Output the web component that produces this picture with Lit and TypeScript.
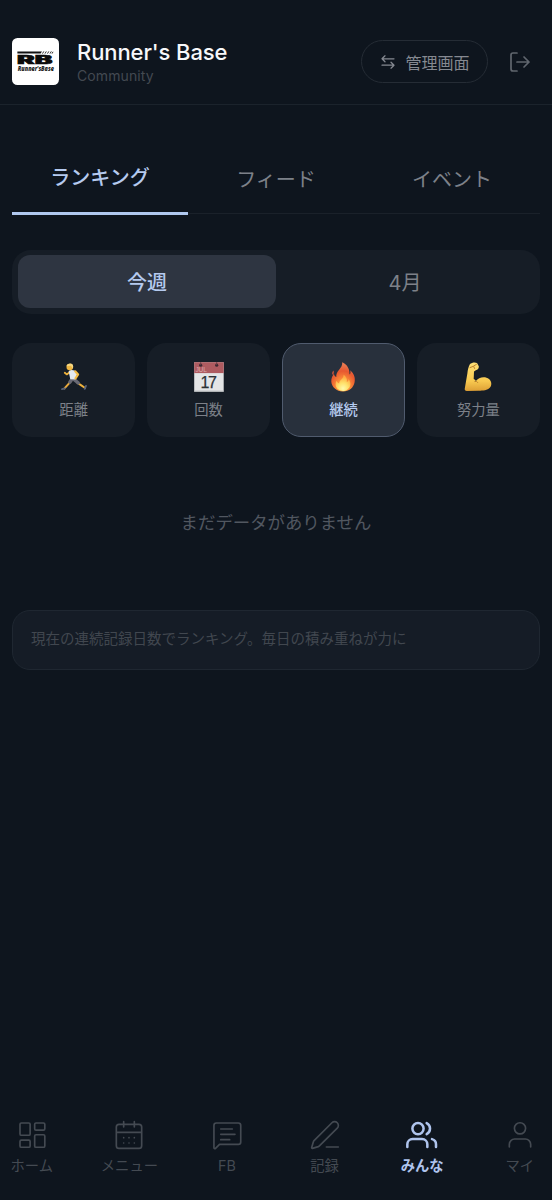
import { LitElement, html, css, svg } from "lit";
import { customElement } from "lit/decorators.js";
import { classMap } from "lit/directives/class-map.js";

const logo = svg`<svg class="logo" viewBox="0 0 47 47" role="img" aria-label="Runner's Base">
  <rect width="47" height="47" rx="5.5" fill="#fff"/>
  <path d="M5.4 13.4H30l-1.4 2.2H5.4z" fill="#111"/>
  <path d="M30.5 15.6l1.3-2.2M33 15.6l1.3-2.2M35.5 15.6l1.3-2.2M38 15.6l1.3-2.2M40 15.6l1-1.8" stroke="#333" stroke-width="1"/>
  <text transform="translate(5 25.6) scale(1.9 1)" textLength="18.6" lengthAdjust="spacingAndGlyphs" font-size="11.6" font-weight="900" font-family="Inter" fill="#0b0b0b" stroke="#0b0b0b" stroke-width=".6">RB</text>
  <text x="5.8" y="33" textLength="36" lengthAdjust="spacingAndGlyphs" font-size="6.6" font-weight="800" font-style="italic" font-family="Open Sans" fill="#222">Runner'sBase</text>
</svg>`;

const runner = svg`<svg class="emoji" viewBox="0 0 30 30">
  <g stroke-linecap="round" stroke-linejoin="round" fill="none">
    <path d="M11 10L7.7 12.4 5.8 10.8" stroke="#efb23c" stroke-width="1.8"/>
    <path d="M12.6 18.4L9.6 21.8 5.5 26.4" stroke="#e9a93b" stroke-width="2"/>
    <path d="M18 20.5L22.3 23.4 26.1 26" stroke="#efb23c" stroke-width="1.9"/>
    <path d="M12.8 17.3L10.8 20.2M15 17.4L19.3 21" stroke="#686975" stroke-width="3.4"/>
    <path d="M6 26.4L3 27.2M25.7 26.9L27 23.9" stroke="#56617a" stroke-width="1.8"/>
  </g>
  <path d="M9.6 9.2Q12 7.3 15.6 8.6L18.1 12.2 16.2 17.6 11.3 17.2Z" fill="#e3e8ef"/>
  <path d="M16.2 9.3L19.1 12.5 16.5 16.3" stroke="#f4bb45" stroke-width="2.2" fill="none" stroke-linecap="round" stroke-linejoin="round"/>
  <circle cx="10.8" cy="5.1" r="3.3" fill="#efb641"/>
  <path d="M7.5 4.3Q8.1 1.3 11.7 1.5 15.2 2.2 13.8 6.7L12.8 5 11.7 3.8Z" fill="#f5d681"/>
</svg>`;

const calendar = svg`<svg class="emoji" viewBox="0 0 30 30">
  <path d="M.2.2h29.5v29.5H.2z" fill="#e4e5e6"/>
  <path d="M.2.2h29.5v10.9H.2z" fill="#ae5b60"/>
  <path d="M.2 29.1h29.5" stroke="#b8babd"/>
  <circle cx="6.7" cy="3.2" r="1.6" fill="#3e2932"/><circle cx="22.7" cy="3.2" r="1.6" fill="#3e2932"/>
  <path d="M6.7 3V.2M22.7 3V.2" stroke="#6c4149"/>
  <text x="1.4" y="10.2" font-family="Liberation Sans" font-size="6.6" textLength="11.5" fill="#dcaaae">JUL</text>
  <text x="6.5" y="26.2" font-family="Liberation Sans" font-size="16" textLength="16.5" fill="#2e3235" stroke="#2e3235" stroke-width=".25">17</text>
</svg>`;

const fire = svg`<svg class="emoji" viewBox="0 0 30 30">
  <defs>
    <radialGradient id="flame" cx=".5" cy=".86" r=".78">
      <stop offset="0" stop-color="#ffb64b"/><stop offset=".38" stop-color="#fa8a38"/><stop offset=".72" stop-color="#e75730"/><stop offset="1" stop-color="#e77850"/>
    </radialGradient>
    <radialGradient id="core" cx=".5" cy=".85" r=".7">
      <stop offset="0" stop-color="#fff9ac"/><stop offset=".5" stop-color="#ffe16b"/><stop offset="1" stop-color="#ffac43"/>
    </radialGradient>
  </defs>
  <path d="M14.2.2C19.6 2.6 21.8 7.4 21.5 12.5 22.7 11.5 22.7 9.6 22.1 8.2 25.9 11.4 27.5 15.5 26.6 20.2 25.5 26 21 29.3 15.2 29.4 8.6 29.5 3.8 25.1 3.3 19.7 3 16.2 4.8 13.7 5.9 11.5 6.2 13.4 6.9 14.4 8.3 15.1 7.5 8.8 14.8 6.6 14.2.2Z" fill="url(#flame)"/>
  <path d="M5.4 8.4C4.4 9.7 3.9 11.2 4.4 12.8 6 11.6 6.1 10 5.4 8.4Z" fill="#d6553b"/>
  <path d="M15.7 12.8C18.5 15 19.3 17.4 18.8 20.1 20.2 19.4 20.6 18.2 20.6 17 23.2 20.5 23.2 25 19.2 27.7 16.7 29.4 12.8 29.3 10.5 27.6 7.2 25.3 7.1 21.6 8.5 18.8 9.2 20.2 9.9 21 11.2 21.5 11.1 18.1 15.6 17 15.7 12.8Z" fill="url(#core)"/>
</svg>`;

const muscle = svg`<svg class="emoji" viewBox="0 0 30 30">
  <defs><linearGradient id="skin" x2="0" y2="1"><stop stop-color="#ffe176"/><stop offset=".65" stop-color="#f8c950"/><stop offset="1" stop-color="#dd9f35"/></linearGradient></defs>
  <path d="M7 2.1C8.6.4 12-.1 14 .9L15.8 4.3C16 6.4 14.9 7.9 12.8 8.3L11 9.4 10.7 17.1C12.2 17.5 12.6 18.5 12.8 19 15.8 14.9 22.3 13.8 26 17.1 28.6 19.4 29.1 23 27 25.6 24.4 28.6 20.2 28.7 15.5 28.8L3.7 29C2.2 28.9 1.7 28.2 1.7 27.1L4.4 11.2C4.7 8 5.6 4.5 7 2.1Z" fill="url(#skin)"/>
  <path d="M11.9 19.4Q14 18.7 14.8 20.5M7 5.6l3.6-1.4 1 2.3M11 3.8l2.4-1.4" fill="none" stroke="#b57927" stroke-width=".9" stroke-linecap="round"/>
</svg>`;

const icons: Record<string, unknown> = {
  home: svg`<rect x="3" y="3" width="7.6" height="9.2" rx="1"/><rect x="14" y="3" width="7.6" height="5.4" rx="1"/><rect x="14" y="11.8" width="7.6" height="9.4" rx="1"/><rect x="3" y="15.8" width="7.6" height="5.4" rx="1"/>`,
  menu: svg`<path d="M8 2v4M16 2v4M3 10h18"/><rect x="2.5" y="4" width="19" height="18" rx="2"/><path d="M8 14h.01M12 14h.01M16 14h.01M8 18h.01M12 18h.01M16 18h.01"/>`,
  fb: svg`<path d="M2.2 21.3V4.8c0-1.1.7-1.8 1.8-1.8h16.5c1.1 0 1.8.7 1.8 1.8v12.4c0 1.1-.7 1.8-1.8 1.8H6.4l-3 3c-.5.5-1.2.2-1.2-.7zM7.3 7.5H16M7.3 11.5H18M7.3 15.5H14"/>`,
  record: svg`<path d="M13 21h9M21.2 6.8a2.8 2.8 0 0 0-4-4L3.8 16.2a2 2 0 0 0-.5.8L2 21.4a.5.5 0 0 0 .6.6l4.4-1.3a2 2 0 0 0 .8-.5z"/>`,
  all: svg`<path d="M16 21v-2a4 4 0 0 0-4-4H5a4 4 0 0 0-4 4v2M22.5 21v-2a4 4 0 0 0-3-3.9M15.5 3.1a4.6 4.6 0 0 1 0 8.2"/><circle cx="9" cy="7.2" r="4.2"/>`,
  my: svg`<path d="M20 21v-2a4 4 0 0 0-4-4H8a4 4 0 0 0-4 4v2"/><circle cx="12" cy="7" r="4.2"/>`,
};

@customElement("app-root")
export class AppRoot extends LitElement {
  static styles = css`
    :host { display: block; height: 1200px; overflow: hidden; background: #0e151e; color: #7d8189; font-family: Inter, "Noto Sans CJK JP", sans-serif; }
    * { box-sizing: border-box; }
    button { font: inherit; color: inherit; border: 0; padding: 0; background: none; white-space: nowrap; }
    .page { height: 1200px; display: flex; flex-direction: column; }
    .header { height: 105px; flex: none; padding: 19px 20px 0 12px; display: flex; align-items: center; border-bottom: 1.5px solid #1b232c; }
    .logo { width: 47px; height: 47px; flex: none; }
    .brand { margin-left: 18px; flex: 1; }
    .title { margin: 0; color: #f7f8fa; font-size: 22px; line-height: 25px; font-weight: 500; letter-spacing: -.1px; white-space: nowrap; padding-top: 1px; }
    .sub { color: #434951; font-size: 14px; line-height: 18px; letter-spacing: .1px; margin-top: 2px; }
    .admin { width: 127px; height: 43px; border: 1.5px solid #252c35; border-radius: 22px; display: flex; align-items: center; justify-content: center; gap: 9px; font-size: 16px; color: #858991; margin-right: 20px; padding-left: 1px; }
    .swap { width: 16px; height: 16px; }
    .exit { width: 24px; height: 24px; color: #60666e; }
    .line { fill: none; stroke: currentColor; stroke-linecap: round; stroke-linejoin: round; display: block; flex: none; }
    .main { flex: 1; padding: 39px 12px 0; }
    .tabs { display: grid; grid-template-columns: repeat(3, 1fr); height: 70px; border-bottom: 1.5px solid #1a212a; }
    .tab { font-size: 20px; line-height: 30px; padding-top: 1px; margin-bottom: -1.5px; }
    .tab.on { color: #b5caef; font-weight: 500; border-bottom: 3px solid #b0c8ef; padding: 0; }
    .segment { display: grid; grid-template-columns: 258px 1fr; margin-top: 36px; height: 64px; border-radius: 19px; background: #161d26; padding: 5px 6px 6px; }
    .choice { font-size: 20px; border-radius: 12px; }
    .choice.on { color: #b5caef; background: #2e3541; font-weight: 500; }
    .metrics { display: grid; grid-template-columns: repeat(4, 1fr); gap: 11.6px; margin-top: 29px; }
    .metric { height: 94px; border-radius: 19px; background: #161d26; display: flex; flex-direction: column; align-items: center; padding-top: 19px; font-size: 14.3px; }
    .metric.on { background: #28303c; border: 1.5px solid #505b6e; padding-top: 17.5px; color: #b5caef; font-weight: 500; }
    .emoji { width: 30px; height: 30px; display: block; flex: none; }
    .name { line-height: 20px; margin-top: 8px; }
    .empty { text-align: center; font-size: 17.4px; line-height: 26px; margin-top: 73px; color: #515760; }
    .note { height: 60px; margin-top: 74px; border: 1.5px solid #1f2731; border-radius: 18px; background: #151c26; padding: 0 18px; font-size: 14.5px; line-height: 56px; color: #41474f; white-space: nowrap; }
    .nav { flex: none; height: 90px; display: grid; grid-template-columns: repeat(6, 97.6px); margin-left: -17px; }
    .item { display: flex; flex-direction: column; align-items: center; color: #444a52; font-size: 14.3px; padding-top: 9px; }
    .item.on { color: #afc4ed; font-weight: 700; }
    .glyph { width: 32px; height: 32px; }
    .label { line-height: 20px; margin-top: 5px; }
  `;

  private tab(text: string, on = false) {
    return html`<button class=${classMap({ tab: true, on })}>${text}</button>`;
  }

  private metric(icon: unknown, text: string, on = false) {
    return html`<button class=${classMap({ metric: true, on })}>${icon}<span class="name">${text}</span></button>`;
  }

  private item(icon: string, text: string, on = false) {
    return html`<button class=${classMap({ item: true, on })}>
      <svg class="glyph line" viewBox="0 0 24 24" stroke-width=${on ? 1.9 : 1.25}>${icons[icon]}</svg>
      <span class="label">${text}</span>
    </button>`;
  }

  render() {
    return html`<div class="page">
      <header class="header">
        ${logo}
        <div class="brand"><h1 class="title">Runner's Base</h1><div class="sub">Community</div></div>
        <button class="admin">
          <svg class="swap line" viewBox="0 0 16 16" stroke-width="1.25"><path d="M5 1.8L2 4.8l3 3M2 4.8h12M11 8.2l3 3-3 3M14 11.2H2"/></svg>
          <span>管理画面</span>
        </button>
        <button aria-label="ログアウト"><svg class="exit line" viewBox="0 0 24 24" stroke-width="1.7"><path d="M9 21H5a2 2 0 0 1-2-2V5a2 2 0 0 1 2-2h4M16 17l5-5-5-5M21 12H9"/></svg></button>
      </header>
      <main class="main">
        <div class="tabs">${this.tab("ランキング", true)}${this.tab("フィード")}${this.tab("イベント")}</div>
        <div class="segment"><button class="choice on">今週</button><button class="choice">4月</button></div>
        <div class="metrics">
          ${this.metric(runner, "距離")}${this.metric(calendar, "回数")}${this.metric(fire, "継続", true)}${this.metric(muscle, "努力量")}
        </div>
        <div class="empty">まだデータがありません</div>
        <div class="note">現在の連続記録日数でランキング。毎日の積み重ねが力に</div>
      </main>
      <nav class="nav">
        ${this.item("home", "ホーム")}${this.item("menu", "メニュー")}${this.item("fb", "FB")}${this.item("record", "記録")}${this.item("all", "みんな", true)}${this.item("my", "マイ")}
      </nav>
    </div>`;
  }
}
